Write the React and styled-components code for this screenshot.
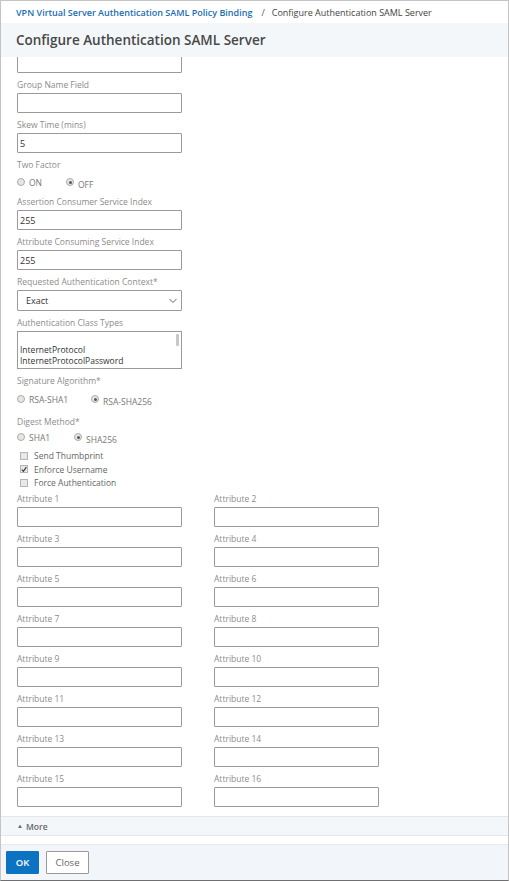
import React, { useEffect, useRef } from "react";
import styled, { createGlobalStyle } from "styled-components";

const GlobalStyle = createGlobalStyle`
    html, body {
        margin: 0;
        padding: 0;
        background: #fff;
    }
    body {
        font-family: "Open Sans", "Noto Sans", sans-serif;
    }
`;

const Frame = styled.div`
    width: 507px;
    height: 879px;
    border: 1px solid #c4c4c4;
    border-bottom-color: #6f6f6f;
    display: flex;
    flex-direction: column;
    background: #fff;
    overflow: hidden;
`;

const Breadcrumb = styled.div`
    height: 22px;
    display: flex;
    align-items: center;
    padding-left: 15px;
    font-size: 9px;
    color: #444;
    flex: none;
    white-space: nowrap;
`;

const CrumbLink = styled.a`
    color: #1a6db3;
    font-weight: 600;
    text-decoration: none;
`;

const CrumbSep = styled.span`
    margin: 0 7px 0 9px;
    color: #555;
`;

const TitleBar = styled.div`
    height: 34px;
    background: #f4f7fa;
    display: flex;
    align-items: center;
    padding-left: 15px;
    flex: none;
`;

const Title = styled.h1`
    margin: 0;
    font-size: 13.5px;
    line-height: 20px;
    font-weight: 600;
    color: #484848;
    white-space: nowrap;
`;

const Scroller = styled.div`
    flex: 1;
    min-height: 0;
    overflow: hidden;
`;

const Form = styled.div`
    padding: 10px 0 11px 16px;
`;

const Field = styled.div`
    margin-bottom: 6px;
`;

const Label = styled.div`
    font-size: 8.5px;
    line-height: 12px;
    color: #8c8c8c;
    margin-bottom: 2px;
    white-space: nowrap;
`;

const Input = styled.div`
    box-sizing: border-box;
    width: 165px;
    height: ${p => p.$h || 20}px;
    border: 1px solid #9a9a9a;
    border-radius: 1px;
    font-size: 9px;
    color: #333;
    display: flex;
    align-items: center;
    padding-left: ${p => p.$pad || 2}px;
    position: relative;
`;

const Chevron = styled.svg`
    position: absolute;
    right: 4px;
    top: 7px;
`;

const ListBox = styled.div`
    box-sizing: border-box;
    width: 165px;
    height: 38px;
    border: 1px solid #9a9a9a;
    font-size: 8.5px;
    line-height: 11px;
    color: #333;
    padding: 0 0 0 2px;
    overflow: hidden;
    position: relative;
`;

const ListLine = styled.div`
    height: 11px;
    margin-top: ${p => p.$first ? 12 : 0}px;
    white-space: nowrap;
`;

const ScrollThumb = styled.div`
    position: absolute;
    right: 2px;
    top: 2px;
    width: 3px;
    height: 12px;
    background: #c8c8c8;
    border-radius: 1px;
`;

const RadioRow = styled.div`
    display: flex;
    align-items: center;
    height: 14px;
    margin: ${p => p.$top}px 0 ${p => p.$bottom}px;
    font-size: 8.5px;
    color: #777;
`;

const RadioItem = styled.label`
    display: flex;
    align-items: center;
    width: ${p => p.$w}px;
    white-space: nowrap;
`;

const RadioDot = styled.span`
    box-sizing: border-box;
    width: 8px;
    height: 8px;
    border-radius: 50%;
    border: 1px solid #aaa;
    background: #e6e6e6;
    margin-right: 4px;
    display: inline-flex;
    align-items: center;
    justify-content: center;
    flex: none;
    &::after {
        content: "";
        width: 3px;
        height: 3px;
        border-radius: 50%;
        background: ${p => p.$on ? "#555" : "transparent"};
    }
`;

const RadioText = styled.span`
    position: relative;
    top: ${p => p.$on ? 2 : 0}px;
`;

const Checks = styled.div`
    padding-left: 3px;
    margin-bottom: 3px;
`;

const CheckRow = styled.div`
    display: flex;
    align-items: center;
    height: 13.5px;
    font-size: 8.5px;
    color: #666;
    white-space: nowrap;
`;

const CheckBox = styled.span`
    box-sizing: border-box;
    width: 8px;
    height: 8px;
    border: 1px solid #b5b5b5;
    background: #e8e8e8;
    margin-right: 6px;
    display: inline-flex;
    align-items: center;
    justify-content: center;
`;

const AttrGrid = styled.div`
    display: grid;
    grid-template-columns: 197px 165px;
`;

const MoreBar = styled.div`
    height: 18px;
    flex: none;
    background: #f4f7fa;
    border-top: 1px solid #e3e7eb;
    border-bottom: 1px solid #e3e7eb;
    display: flex;
    align-items: center;
    padding-left: 16px;
    font-size: 8.5px;
    font-weight: 600;
    color: #666;
`;

const Caret = styled.span`
    font-size: 6px;
    margin-right: 3px;
`;

const Gap = styled.div`
    height: 8px;
    flex: none;
`;

const Footer = styled.div`
    height: 36px;
    box-sizing: border-box;
    flex: none;
    background: #f2f6fa;
    border-top: 1px solid #e6eaee;
    display: flex;
    align-items: flex-start;
    padding: 6px 0 0 5px;
    gap: 7px;
`;

const Button = styled.button`
    box-sizing: border-box;
    height: 23px;
    padding: 0 8px;
    font-family: "Open Sans", sans-serif;
    font-size: 9.5px;
    border-radius: 1px;
    border: 1px solid ${p => p.$primary ? "#0b73c2" : "#999"};
    background: ${p => p.$primary ? "#0b73c2" : "#fff"};
    color: ${p => p.$primary ? "#fff" : "#666"};
    font-weight: ${p => p.$primary ? 600 : 400};
    min-width: ${p => p.$primary ? 33 : 43}px;
`;

const TextField = ({ label, value }) => (
    <Field>
        <Label>{label}</Label>
        <Input>{value}</Input>
    </Field>
);

const Radios = ({ items, selected, widths, top = 4, bottom = 7 }) => (
    <RadioRow $top={top} $bottom={bottom}>
        {items.map((it, i) => (
            <RadioItem key={it} $w={widths[i]}>
                <RadioDot $on={it === selected} />
                <RadioText $on={it === selected}>{it}</RadioText>
            </RadioItem>
        ))}
    </RadioRow>
);

const Check = ({ label, checked }) => (
    <CheckRow>
        <CheckBox>
            {checked && (
                <svg width="7" height="7" viewBox="0 0 7 7">
                    <path d="M1 3.6 L2.8 5.6 L6.2 0.8" fill="none" stroke="#333" strokeWidth="1.3" />
                </svg>
            )}
        </CheckBox>
        {label}
    </CheckRow>
);

const App = () => {
    const scrollRef = useRef(null);

    useEffect(() => {
        if (scrollRef.current) scrollRef.current.scrollTop = 28;
    }, []);

    const attrs = Array.from({ length: 16 }, (_, i) => `Attribute ${i + 1}`);

    return (
        <>
            <GlobalStyle />
            <Frame>
                <Breadcrumb>
                    <CrumbLink href="#">VPN Virtual Server Authentication SAML Policy Binding</CrumbLink>
                    <CrumbSep>/</CrumbSep>
                    Configure Authentication SAML Server
                </Breadcrumb>
                <TitleBar>
                    <Title>Configure Authentication SAML Server</Title>
                </TitleBar>
                <Scroller ref={scrollRef}>
                    <Form>
                        <TextField label="Default Authentication Group" />
                        <TextField label="Group Name Field" />
                        <TextField label="Skew Time (mins)" value="5" />
                        <Label>Two Factor</Label>
                        <Radios items={["ON", "OFF"]} selected="OFF" widths={[49, 40]} />
                        <TextField label="Assertion Consumer Service Index" value="255" />
                        <TextField label="Attribute Consuming Service Index" value="255" />
                        <Field>
                            <Label>Requested Authentication Context*</Label>
                            <Input $h={21} $pad={8}>
                                Exact
                                <Chevron width="8" height="6" viewBox="0 0 8 6">
                                    <path d="M0.5 1 L4 4.5 L7.5 1" fill="none" stroke="#555" strokeWidth="0.9" />
                                </Chevron>
                            </Input>
                        </Field>
                        <Field>
                            <Label>Authentication Class Types</Label>
                            <ListBox>
                                <ListLine $first>InternetProtocol</ListLine>
                                <ListLine>InternetProtocolPassword</ListLine>
                                <ListLine>Kerberos</ListLine>
                                <ScrollThumb />
                            </ListBox>
                        </Field>
                        <Label>Signature Algorithm*</Label>
                        <Radios items={["RSA-SHA1", "RSA-SHA256"]} selected="RSA-SHA256" widths={[74, 70]} top={5} bottom={10} />
                        <Label>Digest Method*</Label>
                        <Radios items={["SHA1", "SHA256"]} selected="SHA256" widths={[57, 50]} top={1} bottom={5} />
                        <Checks>
                            <Check label="Send Thumbprint" />
                            <Check label="Enforce Username" checked />
                            <Check label="Force Authentication" />
                        </Checks>
                        <AttrGrid>
                            {attrs.map(a => (
                                <TextField key={a} label={a} />
                            ))}
                        </AttrGrid>
                    </Form>
                </Scroller>
                <MoreBar>
                    <Caret>▲</Caret>More
                </MoreBar>
                <Gap />
                <Footer>
                    <Button $primary>OK</Button>
                    <Button>Close</Button>
                </Footer>
            </Frame>
        </>
    );
};

export default App;
